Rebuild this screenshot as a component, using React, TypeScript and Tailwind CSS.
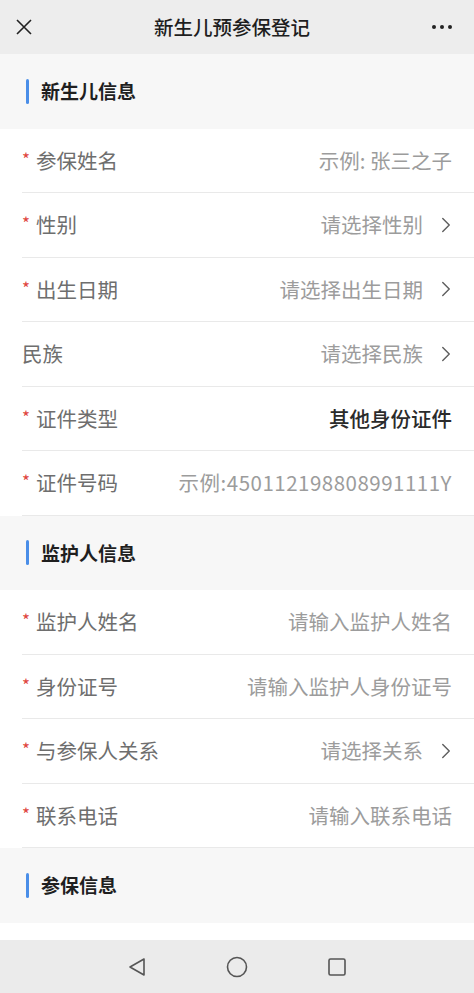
import { ChevronRight } from "lucide-react";

type Row = {
	label: string;
	value: string;
	required?: boolean;
	arrow?: boolean;
	filled?: boolean;
	wide?: boolean;
};

const babyRows: Row[] = [
	{ label: "参保姓名", value: "示例: 张三之子", required: true },
	{ label: "性别", value: "请选择性别", required: true, arrow: true },
	{ label: "出生日期", value: "请选择出生日期", required: true, arrow: true },
	{ label: "民族", value: "请选择民族", arrow: true },
	{ label: "证件类型", value: "其他身份证件", required: true, filled: true },
	{ label: "证件号码", value: "示例:450112198808991111Y", required: true, wide: true },
];

const guardianRows: Row[] = [
	{ label: "监护人姓名", value: "请输入监护人姓名", required: true },
	{ label: "身份证号", value: "请输入监护人身份证号", required: true },
	{ label: "与参保人关系", value: "请选择关系", required: true, arrow: true },
	{ label: "联系电话", value: "请输入联系电话", required: true },
];

const SectionTitle = ({ title }: { title: string }) => (
	<div className="h-[74.5px] bg-[#f7f7f7] flex items-center pl-[26px]">
		<div className="w-[3px] h-[25px] rounded-full bg-[#4a8ee8]"></div>
		<div className="ml-[12px] text-[19px] font-bold text-[#1f1f1f]">{title}</div>
	</div>
);

const FormRow = ({ row }: { row: Row }) => (
	<div className="h-[64.5px] ml-[22px] border-b border-[#e9e9e9] flex items-center pr-[22px]">
		<div className="w-[14px] text-[#e0453e] text-[17px] leading-none -mt-[4px]">
			{row.required ? "*" : ""}
		</div>
		<div
			className={`${row.required ? "" : "-ml-[14px]"} text-[20.5px] text-[#6e6e6e] whitespace-nowrap`}
		>
			{row.label}
		</div>
		<div className="flex-1 flex items-center justify-end">
			<span
				className={`text-[20.5px] whitespace-nowrap ${row.filled ? "text-[#2b2b2b] font-medium" : "text-[#9c9c9c]"} ${row.wide ? "tracking-[0.5px]" : ""}`}
			>
				{row.value}
			</span>
			{row.arrow && (
				<ChevronRight
					className="ml-[10px] -mr-[7px] text-[#5e5e5e]"
					size={26}
					strokeWidth={1.3}
				/>
			)}
		</div>
	</div>
);

export default function App() {
	return (
		<div
			className="w-[474px] h-[993px] bg-white flex flex-col overflow-hidden"
			style={{ fontFamily: '"Noto Sans CJK SC", "Noto Sans", sans-serif' }}
		>
			<div className="h-[54px] bg-[#ededed] flex items-center justify-between px-[15px] shrink-0">
				<svg width="16" height="16" viewBox="0 0 16 16" className="ml-[1px]">
					<path d="M1 1 L15 15 M15 1 L1 15" stroke="#222" strokeWidth="1.6" />
				</svg>
				<div className="text-[19.5px] text-[#1e1e1e] font-medium">新生儿预参保登记</div>
				<div className="flex gap-[4px] mr-[7px]">
					<span className="w-[4px] h-[4px] rounded-full bg-[#222]"></span>
					<span className="w-[4px] h-[4px] rounded-full bg-[#222]"></span>
					<span className="w-[4px] h-[4px] rounded-full bg-[#222]"></span>
				</div>
			</div>

			<SectionTitle title="新生儿信息" />
			{babyRows.map((r) => (
				<FormRow key={r.label} row={r} />
			))}

			<SectionTitle title="监护人信息" />
			{guardianRows.map((r) => (
				<FormRow key={r.label} row={r} />
			))}

			<SectionTitle title="参保信息" />
			<div className="flex-1"></div>

			<div className="h-[53px] bg-[#ebebeb] flex items-center justify-center gap-[78px] shrink-0">
				<svg width="22" height="22" viewBox="0 0 22 22">
					<path d="M18 3 L18 19 L4 11 Z" fill="none" stroke="#555" strokeWidth="1.6" strokeLinejoin="round" />
				</svg>
				<svg width="22" height="22" viewBox="0 0 22 22">
					<circle cx="11" cy="11" r="9.5" fill="none" stroke="#555" strokeWidth="1.6" />
				</svg>
				<svg width="22" height="22" viewBox="0 0 22 22">
					<rect x="3" y="3" width="16" height="16" rx="1.5" fill="none" stroke="#555" strokeWidth="1.6" />
				</svg>
			</div>
		</div>
	);
}
